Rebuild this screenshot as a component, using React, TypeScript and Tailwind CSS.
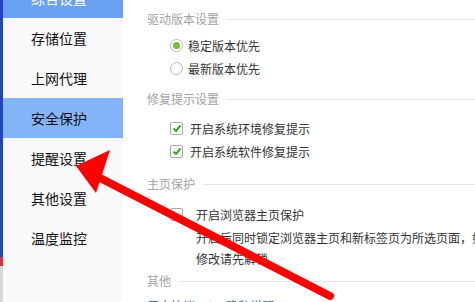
import React from 'react';

const menu = ['综合设置', '存储位置', '上网代理', '安全保护', '提醒设置', '其他设置', '温度监控'];

const SectionTitle: React.FC<{ title: string }> = ({ title }) => (
  <div className="flex items-center h-[20px]">
    <span className="text-[12px] text-[#a3a3a3] leading-none">{title}</span>
    <div className="flex-1 h-px bg-[#e6e6e6] ml-[8px]" />
  </div>
);

const Radio: React.FC<{ checked?: boolean; label: string }> = ({ checked, label }) => (
  <div className="flex items-center h-[23px] pl-[23px]">
    <span className="w-[13px] h-[13px] rounded-full border border-[#b9b9b9] bg-white flex items-center justify-center">
      {checked && <span className="w-[7px] h-[7px] rounded-full bg-[#7dbb3c]" />}
    </span>
    <span className="ml-[5px] text-[12px] text-[#333]">{label}</span>
  </div>
);

const Check: React.FC<{ checked?: boolean; label: string }> = ({ checked, label }) => (
  <div className="flex items-center h-[23px] pl-[23px]">
    <span className="w-[13px] h-[13px] rounded-[2px] border border-[#aaaaaa] bg-white flex items-center justify-center">
      {checked && (
        <svg width="10" height="9" viewBox="0 0 10 9">
          <path d="M1.5 4.5 L4 7 L8.5 1.5" fill="none" stroke="#3fa12b" strokeWidth="2" />
        </svg>
      )}
    </span>
    <span className="ml-[7px] text-[12px] text-[#333]">{label}</span>
  </div>
);

export default function App() {
  return (
    <div
      className="relative w-[475px] h-[302px] overflow-hidden flex bg-white"
      style={{ fontFamily: '"Noto Sans CJK SC", "Liberation Sans", sans-serif' }}
    >
      {/* left strip */}
      <div className="w-[3px] shrink-0 flex flex-col">
        <div className="h-[257px] bg-[#2344c2]" />
        <div className="h-[9px] bg-[#e03040]" />
        <div className="flex-1 bg-[#d6d6d6]" />
      </div>

      {/* sidebar */}
      <div className="w-[120px] shrink-0 bg-[#f9f9f9] flex flex-col -mt-[22px]">
        {menu.map((m, i) => (
          <div
            key={m}
            className={
              'h-[40px] flex items-center pl-[28px] text-[14px] ' +
              (i === 0 ? 'bg-[#6aa0f3] text-white' : i === 3 ? 'bg-[#84b5f9] text-[#111]' : 'text-[#111]')
            }
          >
            {m}
          </div>
        ))}
      </div>

      {/* content */}
      <div className="flex-1 min-w-0 pl-[24px] pt-[13px] flex flex-col">
        <SectionTitle title="驱动版本设置" />
        <div className="mt-[9px]">
          <Radio checked label="稳定版本优先" />
          <Radio label="最新版本优先" />
        </div>
        <div className="mt-[9px]">
          <SectionTitle title="修复提示设置" />
        </div>
        <div className="mt-[8px]">
          <Check checked label="开启系统环境修复提示" />
          <Check checked label="开启系统软件修复提示" />
        </div>
        <div className="mt-[11px]">
          <SectionTitle title="主页保护" />
        </div>
        <div className="mt-[9px] pl-[23px] flex">
          <span className="mt-[5px] w-[13px] h-[13px] rounded-[2px] border border-[#aaaaaa] bg-white shrink-0" />
          <div className="ml-[13px] text-[12px] text-[#333] leading-[21px] whitespace-nowrap">
            <div className="leading-[24px]">开启浏览器主页保护</div>
            <div>开启后同时锁定浏览器主页和新标签页为所选页面，如</div>
            <div>修改请先解锁</div>
          </div>
        </div>
        <div className="mt-[2px]">
          <SectionTitle title="其他" />
        </div>
        <div className="mt-[6px] flex items-center text-[12px] whitespace-nowrap">
          <span className="text-[#2a6fd8]">用户协议</span>
          <span className="mx-[14px] text-[#ccc]">|</span>
          <span className="text-[#2a6fd8]">隐私说明</span>
        </div>
      </div>

      {/* red arrow annotation */}
      <svg className="absolute inset-0 pointer-events-none" width="475" height="302" viewBox="0 0 475 302">
        <line x1="330" y1="296" x2="100" y2="178" stroke="#ff0000" strokeWidth="8" strokeLinecap="round" />
        <polygon points="76,166 110,150 96,193" fill="#ff0000" />
      </svg>
    </div>
  );
}
